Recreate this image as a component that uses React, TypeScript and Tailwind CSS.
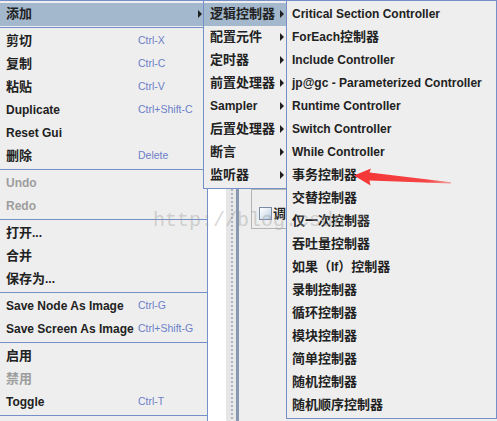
import React from "react";

const CJK = /([\u3000-\u303f\u4e00-\u9fff\uff00-\uffef]+)/;

function Txt({ t }: { t: string }) {
  const parts = t.split(CJK).filter((p) => p !== "");
  return (
    <>
      {parts.map((p, i) =>
        CJK.test(p) ? (
          <span key={i} className="text-[13px]">
            {p}
          </span>
        ) : (
          <span key={i}>{p}</span>
        )
      )}
    </>
  );
}

function Arrow() {
  return (
    <svg width="4" height="8" viewBox="0 0 4 8" className="shrink-0">
      <path d="M0 0 L4 4 L0 8 Z" fill="#1e1e1e" />
    </svg>
  );
}

type Item =
  | { label: string; shortcut?: string; disabled?: boolean; sub?: boolean; hl?: boolean }
  | "sep";

const menu1: Item[] = [
  { label: "添加", sub: true, hl: true },
  "sep",
  { label: "剪切", shortcut: "Ctrl-X" },
  { label: "复制", shortcut: "Ctrl-C" },
  { label: "粘贴", shortcut: "Ctrl-V" },
  { label: "Duplicate", shortcut: "Ctrl+Shift-C" },
  { label: "Reset Gui" },
  { label: "删除", shortcut: "Delete" },
  "sep",
  { label: "Undo", disabled: true },
  { label: "Redo", disabled: true },
  "sep",
  { label: "打开..." },
  { label: "合并" },
  { label: "保存为..." },
  "sep",
  { label: "Save Node As Image", shortcut: "Ctrl-G" },
  { label: "Save Screen As Image", shortcut: "Ctrl+Shift-G" },
  "sep",
  { label: "启用" },
  { label: "禁用", disabled: true },
  { label: "Toggle", shortcut: "Ctrl-T" },
  "sep",
  { label: "" },
];

const menu2 = [
  "逻辑控制器",
  "配置元件",
  "定时器",
  "前置处理器",
  "Sampler",
  "后置处理器",
  "断言",
  "监听器",
];

const menu3 = [
  "Critical Section Controller",
  "ForEach控制器",
  "Include Controller",
  "jp@gc - Parameterized Controller",
  "Runtime Controller",
  "Switch Controller",
  "While Controller",
  "事务控制器",
  "交替控制器",
  "仅一次控制器",
  "吞吐量控制器",
  "如果（If）控制器",
  "录制控制器",
  "循环控制器",
  "模块控制器",
  "简单控制器",
  "随机控制器",
  "随机顺序控制器",
];

export default function App() {
  return (
    <div className="relative w-[497px] h-[421px] overflow-hidden bg-[#eeeeee] font-['Liberation_Sans','Noto_Sans_CJK_SC',sans-serif] text-[12px] font-bold text-[#222222] leading-none select-none">
      {/* background application window */}
      <div className="flex h-full">
        <div className="w-[208px] shrink-0 bg-[#eeeeee]" />
        <div className="w-[18px] shrink-0 bg-white" />
        <div className="flex w-[13px] shrink-0">
          <div className="w-[5px] bg-[#e6e6e6]" />
          <div className="w-[2px] bg-[radial-gradient(circle,#8a94a8_0.6px,transparent_0.9px)] bg-[length:2px_4px] bg-[#ececec]" />
          <div className="w-[3px] bg-[#e8e8e8]" />
          <div className="w-[3px] bg-[#8797b0]" />
        </div>
        <div className="flex-1 bg-[#eeeeee] pl-[12px]">
          <div className="mt-[189px] h-[40px] border border-[#b4b4b4] bg-[#eeeeee] flex items-start pt-[17px] pl-[7px] gap-[1px]">
            <div className="w-[13px] h-[13px] border border-[#7d8ca6] bg-[linear-gradient(135deg,#ffffff_0%,#e4ecf5_45%,#b3c7dd_100%)]" />
            <span className="text-[13px] leading-[13px]">调试</span>
          </div>
        </div>
      </div>

      {/* main popup menu */}
      <div className="absolute left-[-1px] top-0 w-[209px] h-[440px] border border-[#7590c8] bg-[#eeeeee] pt-[2px]">
        {menu1.map((it, i) =>
          it === "sep" ? (
            <div key={i} className="h-[4px] pt-[1px]">
              <div className="h-[1px] bg-[#7590c8]" />
            </div>
          ) : (
            <div
              key={i}
              className={`flex items-center h-[23px] pb-[2px] pl-[6px] pr-[5px] ${it.hl ? "bg-[#a3b8cc]" : ""} ${it.disabled ? "text-[#9d9d9d]" : ""}`}
            >
              <div className="w-[132px] shrink-0 whitespace-nowrap">
                <Txt t={it.label} />
              </div>
              {it.shortcut && (
                <span className="text-[10.5px] font-normal text-[#6c80c8] whitespace-nowrap">{it.shortcut}</span>
              )}
              {it.sub && (
                <div className="ml-auto flex items-center">
                  <Arrow />
                </div>
              )}
            </div>
          )
        )}
      </div>

      {/* submenu 1 */}
      <div className="absolute left-[203px] top-0 w-[84px] border border-[#7590c8] bg-[#eeeeee] pt-[2px] pb-[1px]">
        {menu2.map((t, i) => (
          <div
            key={i}
            className={`flex items-center h-[23px] pb-[2px] pl-[6px] pr-[2px] ${i === 0 ? "bg-[#a3b8cc]" : ""}`}
          >
            <div className="whitespace-nowrap">
              <Txt t={t} />
            </div>
            <div className="ml-auto flex items-center">
              <Arrow />
            </div>
          </div>
        ))}
      </div>

      {/* submenu 2 */}
      <div className="absolute left-[286px] top-0 w-[211px] border border-[#7590c8] bg-[#eeeeee] pt-[2px] pb-[1px]">
        {menu3.map((t, i) => (
          <div key={i} className="flex items-center h-[23px] pb-[2px] pl-[5px] whitespace-nowrap">
            <Txt t={t} />
          </div>
        ))}
      </div>

      {/* red annotation arrow */}
      <svg className="absolute left-0 top-0 pointer-events-none" width="497" height="421" viewBox="0 0 497 421">
        <defs>
          <linearGradient id="ar" x1="355" y1="0" x2="452" y2="0" gradientUnits="userSpaceOnUse">
            <stop offset="0" stopColor="#f53535" />
            <stop offset="0.75" stopColor="#f54545" />
            <stop offset="1" stopColor="#f56a6a" stopOpacity="0.6" />
          </linearGradient>
        </defs>
        <polygon
          points="354,175.5 371,168.5 369.5,172.5 451,182.3 451,183.6 369.5,180.5 370.5,185.5"
          fill="url(#ar)"
        />
      </svg>

      {/* watermark */}
      <div className="absolute left-[153px] top-[211px] pointer-events-none font-['Liberation_Mono',monospace] font-normal text-[20px] leading-[20px] text-[#9a9a9a]/40 whitespace-nowrap">
        http://blog.csdn.n
      </div>
    </div>
  );
}
